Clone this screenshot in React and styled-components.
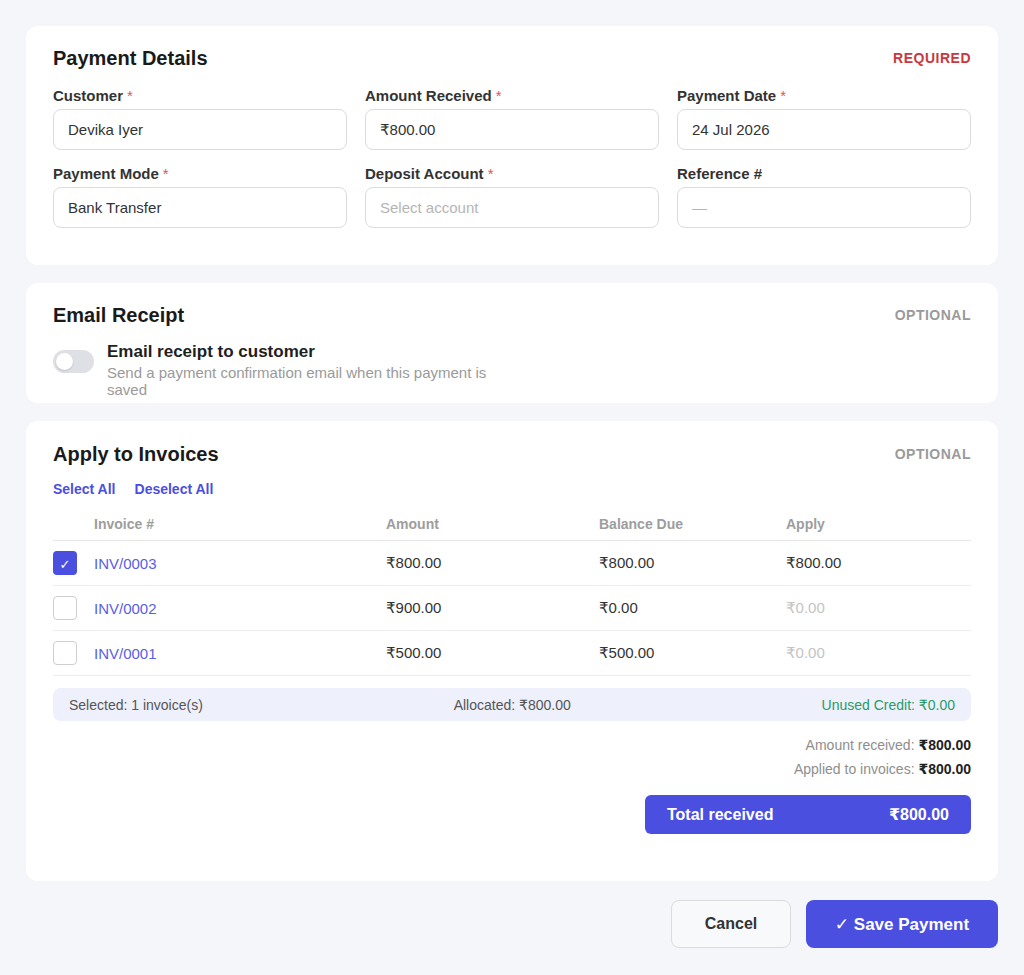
import React, { useState } from "react";
import styled, { createGlobalStyle } from "styled-components";

const PRIMARY = "#4b4fdf";

const GlobalStyle = createGlobalStyle`
  * { box-sizing: border-box; }
  html, body { margin: 0; padding: 0; }
  body {
    background: #f5f6fa;
    font-family: "Liberation Sans", Arial, "DejaVu Sans", sans-serif;
    color: #222;
  }
`;

const Page = styled.div`
  padding: 26px;
  display: flex;
  flex-direction: column;
  gap: 18px;
`;

const Card = styled.section`
  background: #fff;
  border-radius: 12px;
  padding: ${(p) => p.$pad || "20px 27px 37px"};
  display: flex;
  flex-direction: column;
`;

const CardHeader = styled.div`
  display: flex;
  align-items: center;
  justify-content: space-between;
`;

const CardTitle = styled.h2`
  margin: 0;
  font-size: 20px;
  line-height: 24px;
  font-weight: 700;
  color: #1a1a1a;
`;

const Tag = styled.span`
  font-size: 14px;
  font-weight: 700;
  letter-spacing: 0.5px;
  color: ${(p) => (p.$required ? "#c8383d" : "#9a9a9a")};
`;

const FieldGrid = styled.div`
  margin-top: 17px;
  display: grid;
  grid-template-columns: repeat(3, 1fr);
  column-gap: 18px;
  row-gap: 15px;
`;

const Field = styled.label`
  display: flex;
  flex-direction: column;
  gap: 4px;
`;

const Label = styled.span`
  font-size: 15px;
  line-height: 18px;
  font-weight: 700;
  color: #333;
`;

const Star = styled.span`
  color: #e05555;
  font-weight: 400;
  margin-left: 4px;
`;

const Input = styled.div`
  height: 41px;
  border: 1.5px solid #dcdcdc;
  border-radius: 8px;
  padding: 0 14px;
  display: flex;
  align-items: center;
  font-size: 15px;
  color: ${(p) => (p.$placeholder ? "#b5b5b5" : "#333")};
`;

const ToggleRow = styled.div`
  margin-top: 15px;
  display: flex;
  align-items: flex-start;
  gap: 13px;
`;

const Toggle = styled.button`
  margin-top: 8px;
  width: 41px;
  height: 23px;
  border: none;
  border-radius: 12px;
  background: ${(p) => (p.$on ? PRIMARY : "#dfe0e6")};
  padding: 3px;
  display: flex;
  justify-content: ${(p) => (p.$on ? "flex-end" : "flex-start")};
  cursor: pointer;
  flex-shrink: 0;
`;

const Knob = styled.span`
  width: 17px;
  height: 17px;
  border-radius: 50%;
  background: #fff;
  box-shadow: 0 1px 2px rgba(0, 0, 0, 0.15);
`;

const ToggleText = styled.div`
  max-width: 400px;
`;

const ToggleTitle = styled.div`
  font-size: 17px;
  line-height: 20px;
  font-weight: 700;
  color: #1f1f1f;
`;

const ToggleHint = styled.div`
  margin-top: 2px;
  font-size: 15px;
  line-height: 17px;
  color: #9a9a9a;
`;

const LinkRow = styled.div`
  margin-top: 14px;
  display: flex;
  gap: 19px;
`;

const LinkButton = styled.button`
  border: none;
  background: none;
  padding: 0;
  font: inherit;
  font-size: 14px;
  line-height: 18px;
  font-weight: 700;
  color: ${PRIMARY};
  cursor: pointer;
`;

const cols = "41px 292px 213px 187px 1fr";

const TableHead = styled.div`
  margin-top: 10px;
  display: grid;
  grid-template-columns: ${cols};
  padding: 8px 0 8px;
  border-bottom: 1.5px solid #e6e6e6;
  font-size: 14px;
  line-height: 16px;
  font-weight: 700;
  color: #9d9d9d;
`;

const Row = styled.div`
  display: grid;
  grid-template-columns: ${cols};
  align-items: center;
  height: 45px;
  border-bottom: 1px solid #ececec;
  font-size: 15px;
  color: #333;
`;

const Check = styled.span`
  width: 24px;
  height: 24px;
  border-radius: 4px;
  border: ${(p) => (p.$checked ? "none" : "1.5px solid #cfcfcf")};
  background: ${(p) => (p.$checked ? PRIMARY : "#fff")};
  color: #fff;
  font-size: 13px;
  padding-top: 2px;
  display: flex;
  align-items: center;
  justify-content: center;
  cursor: pointer;
`;

const InvLink = styled.span`
  color: #5a5ee4;
`;

const Cell = styled.span`
  color: ${(p) => (p.$muted ? "#c4c4c4" : "#333")};
`;

const SummaryBar = styled.div`
  margin-top: 12px;
  height: 33px;
  border-radius: 8px;
  background: #eef0fc;
  padding: 0 16px;
  display: flex;
  align-items: center;
  justify-content: space-between;
  font-size: 14px;
  color: #555;
`;

const Credit = styled.span`
  color: #2a9a68;
`;

const Totals = styled.div`
  margin-top: 12px;
  display: flex;
  flex-direction: column;
  align-items: flex-end;
  font-size: 14px;
  line-height: 24px;
  color: #8e8e8e;
`;

const TotalValue = styled.strong`
  color: #222;
`;

const TotalBar = styled.div`
  margin-top: 14px;
  align-self: flex-end;
  width: 326px;
  height: 39px;
  border-radius: 6px;
  background: ${PRIMARY};
  color: #fff;
  padding: 0 22px;
  display: flex;
  align-items: center;
  justify-content: space-between;
  font-size: 16px;
  font-weight: 700;
`;

const Actions = styled.div`
  margin-top: 1px;
  display: flex;
  justify-content: flex-end;
  gap: 15px;
`;

const Button = styled.button`
  height: 48px;
  width: ${(p) => p.$w};
  border-radius: 8px;
  font: inherit;
  font-weight: 700;
  font-size: ${(p) => (p.$primary ? "17px" : "16px")};
  border: ${(p) => (p.$primary ? "none" : "1.5px solid #dcdcdc")};
  background: ${(p) => (p.$primary ? PRIMARY : "#f8f9fb")};
  color: ${(p) => (p.$primary ? "#fff" : "#333")};
  cursor: pointer;
`;

const fields = [
  { label: "Customer", value: "Devika Iyer", req: true },
  { label: "Amount Received", value: "₹800.00", req: true },
  { label: "Payment Date", value: "24 Jul 2026", req: true },
  { label: "Payment Mode", value: "Bank Transfer", req: true },
  { label: "Deposit Account", value: "Select account", req: true, ph: true },
  { label: "Reference #", value: "—", ph: true },
];

const invoices = [
  { id: "INV/0003", amount: "₹800.00", balance: "₹800.00", apply: "₹800.00", checked: true },
  { id: "INV/0002", amount: "₹900.00", balance: "₹0.00", apply: "₹0.00" },
  { id: "INV/0001", amount: "₹500.00", balance: "₹500.00", apply: "₹0.00" },
];

export default function App() {
  const [emailOn, setEmailOn] = useState(false);
  const [selected, setSelected] = useState(
    invoices.map((i) => !!i.checked)
  );

  const toggleRow = (idx) =>
    setSelected((s) => s.map((v, i) => (i === idx ? !v : v)));

  return (
    <>
      <GlobalStyle />
      <Page>
        <Card>
          <CardHeader>
            <CardTitle>Payment Details</CardTitle>
            <Tag $required>REQUIRED</Tag>
          </CardHeader>
          <FieldGrid>
            {fields.map((f) => (
              <Field key={f.label}>
                <Label>
                  {f.label}
                  {f.req && <Star>*</Star>}
                </Label>
                <Input $placeholder={f.ph}>{f.value}</Input>
              </Field>
            ))}
          </FieldGrid>
        </Card>

        <Card $pad="20px 27px 5px">
          <CardHeader>
            <CardTitle>Email Receipt</CardTitle>
            <Tag>OPTIONAL</Tag>
          </CardHeader>
          <ToggleRow>
            <Toggle $on={emailOn} onClick={() => setEmailOn((v) => !v)}>
              <Knob />
            </Toggle>
            <ToggleText>
              <ToggleTitle>Email receipt to customer</ToggleTitle>
              <ToggleHint>
                Send a payment confirmation email when this payment is saved
              </ToggleHint>
            </ToggleText>
          </ToggleRow>
        </Card>

        <Card $pad="21px 27px 47px">
          <CardHeader>
            <CardTitle>Apply to Invoices</CardTitle>
            <Tag>OPTIONAL</Tag>
          </CardHeader>
          <LinkRow>
            <LinkButton onClick={() => setSelected(invoices.map(() => true))}>
              Select All
            </LinkButton>
            <LinkButton onClick={() => setSelected(invoices.map(() => false))}>
              Deselect All
            </LinkButton>
          </LinkRow>
          <TableHead>
            <span />
            <span>Invoice #</span>
            <span>Amount</span>
            <span>Balance Due</span>
            <span>Apply</span>
          </TableHead>
          {invoices.map((inv, i) => (
            <Row key={inv.id}>
              <Check $checked={selected[i]} onClick={() => toggleRow(i)}>
                {selected[i] ? "✓" : ""}
              </Check>
              <InvLink>{inv.id}</InvLink>
              <Cell>{inv.amount}</Cell>
              <Cell>{inv.balance}</Cell>
              <Cell $muted={!inv.checked}>{inv.apply}</Cell>
            </Row>
          ))}
          <SummaryBar>
            <span>Selected: 1 invoice(s)</span>
            <span>Allocated: ₹800.00</span>
            <Credit>Unused Credit: ₹0.00</Credit>
          </SummaryBar>
          <Totals>
            <span>
              Amount received: <TotalValue>₹800.00</TotalValue>
            </span>
            <span>
              Applied to invoices: <TotalValue>₹800.00</TotalValue>
            </span>
          </Totals>
          <TotalBar>
            <span>Total received</span>
            <span>₹800.00</span>
          </TotalBar>
        </Card>

        <Actions>
          <Button $w="120px">Cancel</Button>
          <Button $w="192px" $primary>
            ✓ Save Payment
          </Button>
        </Actions>
      </Page>
    </>
  );
}
